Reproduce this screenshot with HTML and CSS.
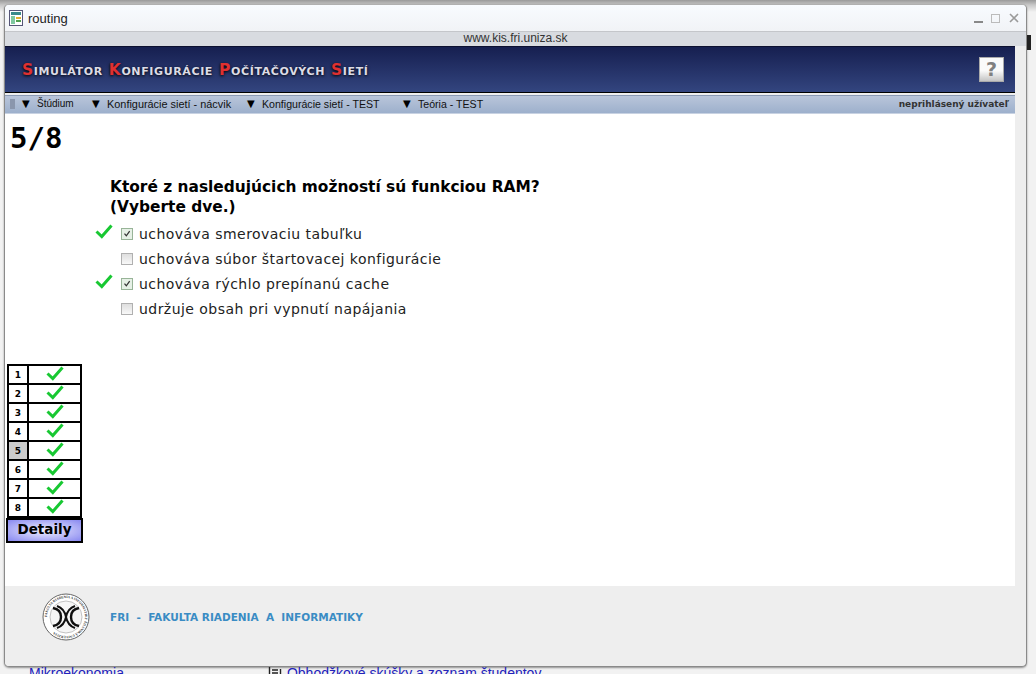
FILE: index.html
```html
<!DOCTYPE html>
<html lang="sk">
<head>
    <meta charset="UTF-8">
    <title>routing</title>
    <link rel="stylesheet" href="styles.css">
</head>
<body>
    <svg class="defs" width="0" height="0">
        <symbol id="tick" viewBox="0 0 18 15">
            <path d="M1.5 7.5 L6.8 12.5 L16.5 1.5" fill="none" stroke="#18c832" stroke-width="3"/>
        </symbol>
        <symbol id="boxtick" viewBox="0 0 12 12">
            <path d="M3 5.5 L5.2 8.2 L9.2 2.5" fill="none" stroke="#333" stroke-width="1.5"/>
        </symbol>
    </svg>
    <div class="window">
        <div class="titlebar">
            <svg class="app-icon" width="14" height="16" viewBox="0 0 14 16">
                <rect x="0.5" y="0.5" width="13" height="15" fill="#fff" stroke="#557"/>
                <rect x="2" y="2" width="10" height="3" fill="#3a8a8a"/>
                <rect x="2" y="6" width="4" height="8" fill="#7fc8a0"/>
                <rect x="7" y="7" width="5" height="2" fill="#e0b030"/>
                <rect x="7" y="10" width="5" height="2" fill="#50a050"/>
            </svg>
            <span class="title">routing</span>
            <div class="controls">
                <span class="ctl-min"></span>
                <span class="ctl-max"></span>
                <svg width="10" height="10" viewBox="0 0 10 10"><path d="M1 1 L9 9 M9 1 L1 9" stroke="#9a9a9a" stroke-width="1.6"/></svg>
            </div>
        </div>
        <div class="urlbar">www.kis.fri.uniza.sk</div>
        <div class="page">
            <div class="banner">
                <div class="brand"><b>S</b>imulátor <b>K</b>onfigurácie <b>P</b>očítačových <b>S</b>ietí</div>
                <div class="help">?</div>
            </div>
            <div class="menubar">
                <div class="grip"></div>
                <div class="menu-item m1"><i>▼</i><span>Štúdium</span></div>
                <div class="menu-item m2"><i>▼</i><span>Konfigurácie sietí - nácvik</span></div>
                <div class="menu-item m3"><i>▼</i><span>Konfigurácie sietí - TEST</span></div>
                <div class="menu-item m4"><i>▼</i><span>Teória - TEST</span></div>
                <div class="user">neprihlásený užívateľ</div>
            </div>
            <div class="content">
                <h1 class="counter">5/8</h1>
                <div class="question">
                    <h2>Ktoré z nasledujúcich možností sú funkciou RAM?<br>(Vyberte dve.)</h2>
                    <ul class="answers">
                        <li><svg class="mark"><use href="#tick"/></svg><span class="box checked"><svg><use href="#boxtick"/></svg></span>uchováva smerovaciu tabuľku</li>
                        <li><span class="mark"></span><span class="box"></span>uchováva súbor štartovacej konfigurácie</li>
                        <li><svg class="mark"><use href="#tick"/></svg><span class="box checked"><svg><use href="#boxtick"/></svg></span>uchováva rýchlo prepínanú cache</li>
                        <li><span class="mark"></span><span class="box"></span>udržuje obsah pri vypnutí napájania</li>
                    </ul>
                </div>
                <div class="progress">
                    <table>
                        <tr><th>1</th><td><svg class="small-tick"><use href="#tick"/></svg></td></tr>
                        <tr><th>2</th><td><svg class="small-tick"><use href="#tick"/></svg></td></tr>
                        <tr><th>3</th><td><svg class="small-tick"><use href="#tick"/></svg></td></tr>
                        <tr><th>4</th><td><svg class="small-tick"><use href="#tick"/></svg></td></tr>
                        <tr><th class="current">5</th><td><svg class="small-tick"><use href="#tick"/></svg></td></tr>
                        <tr><th>6</th><td><svg class="small-tick"><use href="#tick"/></svg></td></tr>
                        <tr><th>7</th><td><svg class="small-tick"><use href="#tick"/></svg></td></tr>
                        <tr><th>8</th><td><svg class="small-tick"><use href="#tick"/></svg></td></tr>
                    </table>
                    <div class="details">Detaily</div>
                </div>
            </div>
            <div class="footer">
                <svg class="logo" width="48" height="48" viewBox="0 0 48 48">
                    <defs><path id="ring" d="M24 24 m-19 0 a19 19 0 1 1 38 0 a19 19 0 1 1 -38 0"/></defs>
                    <circle cx="24" cy="24" r="23" fill="#fff" stroke="#666" stroke-width="1"/>
                    <circle cx="24" cy="24" r="16" fill="#f6f6f6" stroke="#aaa" stroke-width="0.7"/>
                    <text class="logo-text"><textPath href="#ring">FAKULTA RIADENIA A INFORMATIKY ŽILINSKÁ UNIVERZITA</textPath></text>
                    <path d="M11 15 C17 16 19 20 19 24 C19 28 17 32 11 33 M37 15 C31 16 29 20 29 24 C29 28 31 32 37 33" fill="none" stroke="#111" stroke-width="2.4"/>
                    <path d="M15 13 C21 15 23 19 24 24 C25 19 27 15 33 13 M15 35 C21 33 23 29 24 24 C25 29 27 33 33 35" fill="none" stroke="#111" stroke-width="2"/>
                </svg>
                <div class="faculty">FRI &nbsp;-&nbsp; FAKULTA RIADENIA &nbsp;A&nbsp; INFORMATIKY</div>
            </div>
        </div>
    </div>
    <div class="behind">
        <span class="behind-left">Mikroekonomia</span>
        <svg class="doc-icon" width="14" height="10" viewBox="0 0 14 10"><path d="M1.5 0 V10 M12.5 2 V10 M4 3 H10 M4 6 H10" fill="none" stroke="#222" stroke-width="1.4"/></svg>
        <span class="behind-right">Obhodžkové skúšky a zoznam študentov</span>
    </div>
    <div class="edge-mark"></div>
</body>
</html>
```

FILE: styles.css
```css
* {
    margin: 0;
    padding: 0;
    box-sizing: border-box;
}

html, body {
    height: 674px;
    overflow: hidden;
}

body {
    font-family: "DejaVu Sans", sans-serif;
    background: linear-gradient(#9a9a9a 0, #c8c8c8 5px, #f2f2f2 12px);
    padding: 4px 9px 0 4px;
    color: #000;
}

.defs {
    display: block;
    height: 0;
}

.window {
    height: 663px;
    display: flex;
    flex-direction: column;
    background-color: #eeeeee;
    border: 1px solid #8a8a8a;
    border-top-color: #b0b0b0;
    border-radius: 5px;
    box-shadow: 0 1px 2px rgba(0, 0, 0, 0.4);
    overflow: hidden;
}

.titlebar {
    height: 26px;
    flex: none;
    display: flex;
    align-items: center;
    padding: 0 7px 0 4px;
    background: linear-gradient(#f8fbff, #f1f3f6);
}

.app-icon {
    margin-right: 5px;
}

.title {
    font-family: "Liberation Sans", sans-serif;
    font-size: 13px;
    color: #222;
}

.controls {
    margin-left: auto;
    display: flex;
    align-items: center;
    gap: 8px;
}

.ctl-min {
    width: 9px;
    height: 2px;
    margin-top: 7px;
    background-color: #888;
}

.ctl-max {
    width: 9px;
    height: 9px;
    margin-right: 1px;
    border: 1px solid #bbb;
}

.urlbar {
    height: 15px;
    flex: none;
    background-color: #d8dbe0;
    border-top: 1px solid #c4c6ca;
    font-family: "Liberation Sans", sans-serif;
    font-size: 12px;
    line-height: 13px;
    color: #333;
    text-align: center;
}

.page {
    flex: 1;
    display: flex;
    flex-direction: column;
    margin-right: 11px;
    min-height: 0;
}

.banner {
    height: 47px;
    flex: none;
    display: flex;
    align-items: center;
    justify-content: space-between;
    padding: 0 3px 0 17px;
    background: linear-gradient(#161f50, #33457f);
    border-top: 1px solid #0c1030;
    border-bottom: 1px solid #000;
}

.brand {
    font-weight: bold;
    font-size: 15.5px;
    font-variant: small-caps;
    letter-spacing: 0.62px;
    color: #dcdce6;
    text-shadow: 0 1px 3px #000;
}

.brand b {
    color: #e03030;
}

.help {
    width: 25px;
    height: 25px;
    margin-right: 8px;
    background: linear-gradient(#fafafa 55%, #c4c4c4);
    border: 1px solid #aaa;
    font-weight: bold;
    font-size: 19px;
    line-height: 23px;
    text-align: center;
    color: #808080;
}

.menubar {
    height: 19px;
    flex: none;
    display: flex;
    align-items: center;
    margin-top: 2px;
    padding: 0 6px 2px 5px;
    background: linear-gradient(#b9c5da, #9db0cc);
    border-top: 1px solid #8b9ab5;
    border-bottom: 1px solid #c8d2e2;
    font-family: "Liberation Sans", sans-serif;
    color: #111;
}

.grip {
    width: 5px;
    height: 10px;
    margin-right: 7px;
    background-image: radial-gradient(circle, #8a96ad 50%, transparent 55%);
    background-size: 2px 2px;
}

.menu-item {
    display: flex;
    align-items: center;
    height: 100%;
}

.menu-item i {
    width: 10px;
    font-family: "DejaVu Sans", sans-serif;
    font-size: 10px;
    font-style: normal;
    line-height: 10px;
    color: #000;
}

.menu-item span {
    margin-left: 5px;
    font-size: 10.9px;
    white-space: nowrap;
}

.m1 { width: 70px; }
.m2 { width: 155px; }
.m3 { width: 156px; }
.m1 span { font-size: 10px; }
.m3 span, .m4 span { font-size: 10.6px; }

.user {
    margin-left: auto;
    font-family: "DejaVu Sans", sans-serif;
    font-size: 9px;
    font-weight: bold;
    color: #333;
}

.content {
    flex: 1;
    position: relative;
    background-color: #fff;
    padding: 10px 6px 0;
    min-height: 0;
}

.counter {
    font-family: "DejaVu Sans Mono", monospace;
    font-size: 29px;
    line-height: 28px;
    margin-left: -1px;
}

.question {
    margin: 25px 0 0 84px;
}

.question h2 {
    margin-left: 15px;
    font-size: 15.4px;
    line-height: 20px;
}

.answers {
    list-style: none;
    margin-top: 4px;
}

.answers li {
    display: flex;
    align-items: center;
    height: 25px;
    font-size: 14px;
    letter-spacing: 0.45px;
    color: #222;
}

.mark {
    width: 18px;
    height: 15px;
    margin: -4px 8px 0 0;
    flex: none;
}

.box {
    width: 12px;
    height: 12px;
    margin-right: 6px;
    border: 1px solid #b0b0b0;
    background: linear-gradient(#dedede, #f8f8f8);
}

.box.checked {
    border-color: #98b498;
    background: #e6f0e6;
}

.box svg {
    display: block;
    width: 10px;
    height: 10px;
}

.progress {
    position: absolute;
    left: 1px;
    top: 250px;
    width: 77px;
}

.progress table {
    border-collapse: collapse;
    width: 75px;
    margin-left: 1px;
}

.progress th, .progress td {
    height: 19px;
    border: 2px solid #000;
    padding: 0;
}

.progress th {
    width: 20px;
    font-size: 9px;
}

.progress td {
    text-align: center;
}

.progress th.current {
    background-color: #cccccc;
}

.small-tick {
    display: block;
    width: 18px;
    height: 15px;
    margin: -1px auto 1px;
}

.details {
    height: 25px;
    border: 2px solid #000;
    background: radial-gradient(ellipse at center, #f0f0ff, #8888f0);
    font-weight: bold;
    font-size: 13.5px;
    line-height: 18px;
    text-align: center;
}

.footer {
    height: 80px;
    flex: none;
    display: flex;
    align-items: flex-start;
    padding: 7px 0 0 37px;
    background-color: #eeeeee;
}

.logo {
    flex: none;
}

.logo-text {
    font-family: "Liberation Serif", serif;
    font-size: 3.4px;
    font-weight: bold;
    fill: #333;
}

.faculty {
    margin: 18px 0 0 20px;
    font-size: 10.5px;
    font-weight: bold;
    color: #3a8cc4;
    white-space: pre;
}

.behind {
    display: flex;
    height: 10px;
    overflow: hidden;
    font-family: "Liberation Sans", sans-serif;
    font-size: 14px;
    line-height: 12px;
    color: #2222bb;
}

.behind-left {
    margin-left: 25px;
}

.doc-icon {
    margin-left: 144px;
    flex: none;
}

.behind-right {
    margin-left: 5px;
}

.edge-mark {
    position: absolute;
    left: 1027px;
    top: 35px;
    width: 4px;
    height: 15px;
    background-color: #222;
}
```
